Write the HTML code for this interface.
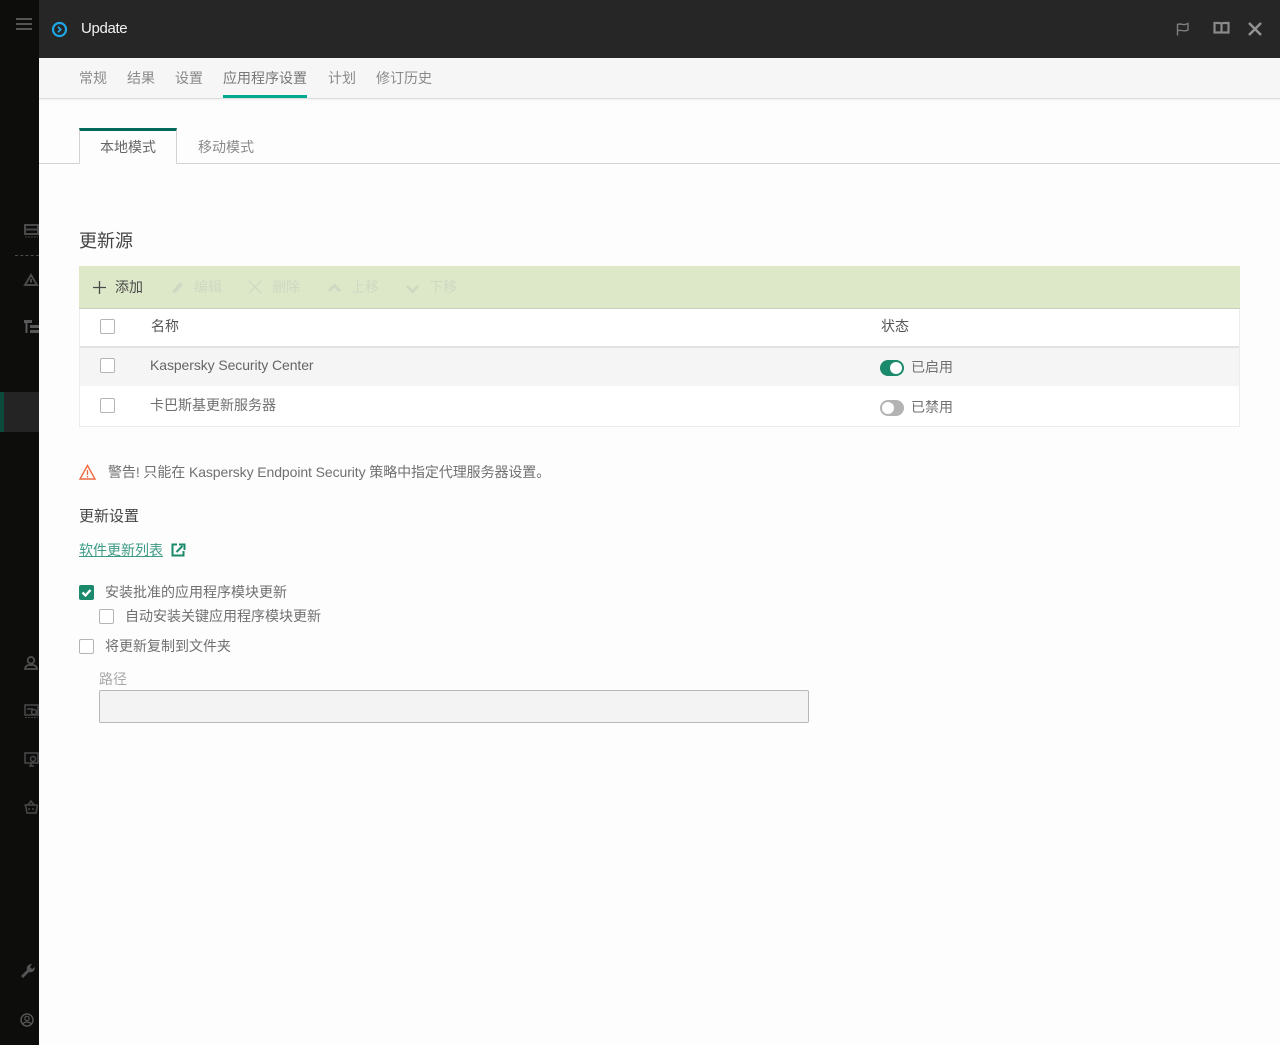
<!DOCTYPE html>
<html lang="zh">
<head>
<meta charset="utf-8">
<title>Update</title>
<style>
html,body{margin:0;padding:0;width:1280px;height:1045px;overflow:hidden;background:#fdfdfd;}
body{position:relative;font-family:"Liberation Sans","Noto Sans CJK SC",sans-serif;font-size:14px;color:#5c5c5c;}
.a{position:absolute;white-space:nowrap;line-height:20px;}
.box{position:absolute;width:13px;height:13px;border:1px solid #b4b4b4;border-radius:2px;background:#fff;}
svg{position:absolute;overflow:visible;}
.side{position:absolute;left:0;top:0;width:39px;height:1045px;background:#0d0d0c;overflow:hidden;}
.sic{fill:none;stroke:#4a4a4a;stroke-width:1.5;}
.dis{color:#cfd9c2;}
</style>
</head>
<body>
<!-- sidebar -->
<div class="side">
  <div style="position:absolute;left:0;top:392px;width:39px;height:40px;background:#242424;"></div>
  <div style="position:absolute;left:0;top:392px;width:4px;height:40px;background:#0e4a3c;"></div>
  <div style="position:absolute;left:16px;top:18px;width:16px;height:2px;background:#555;"></div>
  <div style="position:absolute;left:16px;top:23px;width:16px;height:2px;background:#555;"></div>
  <div style="position:absolute;left:16px;top:28px;width:16px;height:2px;background:#555;"></div>
  <div style="position:absolute;left:15px;top:255px;width:24px;border-top:1px dashed #4a4a4a;"></div>
  <svg style="left:0;top:0" width="39" height="1045">
    <path d="M25 225h13v9h-13zM25 229.500h13" fill="none" stroke="#4a4a4a" stroke-width="2"/>
    <path d="M25 237h13" stroke="#444" stroke-width="1" stroke-dasharray="2 1"/>
    <path d="M31 275l6 10h-12zM31 279v3.500" fill="none" stroke="#4a4a4a" stroke-width="2"/>
    <path d="M24 320h8v3h-8z" fill="#5a5a5a"/>
    <path d="M26.500 323v10" fill="none" stroke="#5a5a5a" stroke-width="2"/>
    <path d="M30 325h9v3h-9zM30 330h9v3h-9z" fill="#5a5a5a"/>
    <path d="M31 657a3.300 3.300 0 1 1-.01 0zM25 669c0-3 3-4 4-4h4c1 0 4 1 4 4z" fill="none" stroke="#4f4f4f" stroke-width="1.700"/>
    <path class="sic" d="M25 705h13v10h-13zM27 709h6"/>
    <circle cx="34" cy="712" r="2.500" fill="#0d0d0c" stroke="#4a4a4a" stroke-width="1.500"/>
    <path d="M25 717.500h13" stroke="#444" stroke-width="1" stroke-dasharray="2 1"/>
    <path class="sic" d="M25 753h13v10h-13zM29 766h5M31 763v3"/>
    <circle cx="33" cy="759" r="2.500" fill="#0d0d0c" stroke="#4a4a4a" stroke-width="1.500"/>
    <path class="sic" d="M24.500 805h13M25.500 805l1.500 8h9l1.500-8M28 805l3-4 3 4M29 808v2M33 808v2"/>
    <path d="M21 976l6-6c-1-3 1-6 5-6l-2 3 2 2 3-2c0 4-3 6-6 5l-6 6z" fill="#555"/>
    <circle cx="27" cy="1020" r="6" fill="none" stroke="#555" stroke-width="1.500"/>
    <circle cx="27" cy="1018.500" r="2.200" fill="none" stroke="#555" stroke-width="1.200"/>
    <path d="M23 1024c1-2.500 7-2.500 8 0" fill="none" stroke="#555" stroke-width="1.200"/>
  </svg>
</div>

<!-- header -->
<div style="position:absolute;left:39px;top:0;width:1241px;height:58px;background:#262626;"></div>
<svg style="left:51px;top:21px" width="17" height="17" viewBox="0 0 17 17">
  <circle cx="8.500" cy="8.500" r="6.500" fill="none" stroke="#1ea6e6" stroke-width="2.200"/>
  <path d="M7 5.800l2.700 2.700L7 11.200" fill="none" stroke="#1ea6e6" stroke-width="1.800"/>
</svg>
<div class="a" style="left:81px;top:19px;color:#f2f2f2;font-size:15px;letter-spacing:-.35px;">Update</div>
<svg style="left:1175px;top:20px" width="18" height="18" viewBox="0 0 18 18">
  <path d="M2.500 15.500V4.500c3-1.500 5 .5 7.500 0 1-.2 2-.6 3-1v6.500c-2.500 1.200-4.500 1-6.500.5-1.500-.3-3-.2-4 .5" fill="none" stroke="#7f7f7f" stroke-width="1.400"/>
</svg>
<svg style="left:1213px;top:21px" width="17" height="15" viewBox="0 0 17 15">
  <path d="M1.500 2h5c1 0 2 .5 2 1.500 0-1 1-1.500 2-1.500h5v9.500h-5.500c-.7 0-1.500.3-1.500 1 0-.7-.8-1-1.500-1H1.500zM8.500 3.500v9" fill="none" stroke="#8a8a8a" stroke-width="2.200"/>
</svg>
<svg style="left:1248px;top:22px" width="14" height="14" viewBox="0 0 14 14">
  <path d="M1 1l12 12M13 1L1 13" stroke="#929292" stroke-width="2.500" fill="none"/>
</svg>

<!-- top nav -->
<div style="position:absolute;left:39px;top:58px;width:1241px;height:40px;background:#f6f6f6;border-bottom:1px solid #dcdcdc;box-shadow:0 1px 2px rgba(0,0,0,.06);"></div>
<div class="a" style="left:79px;top:68px;color:#8a8a8a;">常规</div>
<div class="a" style="left:127px;top:68px;color:#8a8a8a;">结果</div>
<div class="a" style="left:175px;top:68px;color:#8a8a8a;">设置</div>
<div class="a" style="left:223px;top:68px;color:#777;">应用程序设置</div>
<div style="position:absolute;left:223px;top:95px;width:84px;height:3px;background:#00a88e;"></div>
<div class="a" style="left:328px;top:68px;color:#8a8a8a;">计划</div>
<div class="a" style="left:376px;top:68px;color:#8a8a8a;">修订历史</div>

<!-- tabs -->
<div style="position:absolute;left:39px;top:163px;width:1241px;height:1px;background:#d2d2d2;"></div>
<div style="position:absolute;left:79px;top:128px;width:96px;background:#fdfdfd;border-left:1px solid #d2d2d2;border-right:1px solid #d2d2d2;border-top:3px solid #006a5a;height:33px;"></div>
<div class="a" style="left:100px;top:137px;color:#666;">本地模式</div>
<div class="a" style="left:198px;top:137px;color:#8a8a8a;">移动模式</div>

<!-- section -->
<div class="a" style="left:79px;top:231px;font-size:18px;color:#444;">更新源</div>

<!-- toolbar -->
<div style="position:absolute;left:79px;top:266px;width:1161px;height:42px;background:#dde8c9;border-bottom:1px solid #c9cfc0;"></div>
<svg style="left:92px;top:280px" width="15" height="15"><path d="M7.500 1v13M1 7.500h13" stroke="#4a4a4a" stroke-width="1.300"/></svg>
<div class="a" style="left:115px;top:277px;color:#4a4a4a;">添加</div>
<svg style="left:171px;top:280px" width="14" height="14"><path d="M1 13l1-3 7-8 3 2.500-7 8z" fill="#cfd9c2"/></svg>
<div class="a dis" style="left:194px;top:277px;">编辑</div>
<svg style="left:248px;top:280px" width="14" height="14"><path d="M1 1l12 12M13 1L1 13" stroke="#cfd9c2" stroke-width="1.300"/></svg>
<div class="a dis" style="left:272px;top:277px;">删除</div>
<svg style="left:327px;top:283px" width="15" height="10"><path d="M2 8l5.500-5.500L13 8" fill="none" stroke="#cfd9c2" stroke-width="3"/></svg>
<div class="a dis" style="left:351px;top:277px;">上移</div>
<svg style="left:405px;top:284px" width="15" height="10"><path d="M2 2l5.500 5.500L13 2" fill="none" stroke="#cfd9c2" stroke-width="3"/></svg>
<div class="a dis" style="left:429px;top:277px;">下移</div>

<!-- table -->
<div style="position:absolute;left:79px;top:309px;width:1159px;height:117px;background:#fff;border:1px solid #ececec;border-top:none;"></div>
<div style="position:absolute;left:80px;top:346px;width:1159px;height:2px;background:#e2e2e2;"></div>
<div style="position:absolute;left:80px;top:348px;width:1159px;height:38px;background:#f5f5f5;"></div>

<div class="box" style="left:100px;top:319px;"></div>
<div class="a" style="left:151px;top:316px;color:#555;">名称</div>
<div class="a" style="left:881px;top:316px;color:#555;">状态</div>

<div class="box" style="left:100px;top:358px;"></div>
<div class="a" style="left:150px;top:355px;color:#666;letter-spacing:-.09px;">Kaspersky Security Center</div>
<div style="position:absolute;left:880px;top:360px;width:24px;height:16px;border-radius:8px;background:#1b8a6c;"></div>
<div style="position:absolute;left:890px;top:362px;width:12px;height:12px;border-radius:6px;background:#fff;"></div>
<div class="a" style="left:911px;top:357px;color:#707070;">已启用</div>

<div class="box" style="left:100px;top:398px;"></div>
<div class="a" style="left:150px;top:395px;color:#707070;">卡巴斯基更新服务器</div>
<div style="position:absolute;left:880px;top:400px;width:24px;height:16px;border-radius:8px;background:#b3b3b3;"></div>
<div style="position:absolute;left:882px;top:402px;width:12px;height:12px;border-radius:6px;background:#fff;"></div>
<div class="a" style="left:911px;top:397px;color:#707070;">已禁用</div>

<!-- warning -->
<svg style="left:79px;top:464px" width="17" height="16" viewBox="0 0 17 16">
  <path d="M8.500 1.500L16 15H1z" fill="none" stroke="#ee6a42" stroke-width="1.400"/>
  <path d="M8.500 6v5M8.500 12v1.500" stroke="#ee6a42" stroke-width="1.300"/>
</svg>
<div class="a" style="left:108px;top:462px;color:#707070;letter-spacing:-.09px;">警告! 只能在 Kaspersky Endpoint Security 策略中指定代理服务器设置。</div>

<!-- settings -->
<div class="a" style="left:79px;top:507px;font-size:15px;color:#444;">更新设置</div>
<div class="a" style="left:79px;top:540px;color:#3d9b85;text-decoration:underline;">软件更新列表</div>
<svg style="left:171px;top:543px" width="15" height="14" viewBox="0 0 15 14">
  <path d="M6 1.500H1.500v11h11V8" fill="none" stroke="#1b8a6c" stroke-width="2"/>
  <path d="M5.500 9l6-6M8 1.500h5.500V7" fill="none" stroke="#1b8a6c" stroke-width="2"/>
</svg>

<div style="position:absolute;left:79px;top:585px;width:15px;height:15px;border-radius:2px;background:#1b8a6c;"></div>
<svg style="left:79px;top:585px" width="15" height="15"><path d="M3.500 7.500l3 3 5-5.500" fill="none" stroke="#fff" stroke-width="2.300"/></svg>
<div class="a" style="left:105px;top:582px;color:#707070;">安装批准的应用程序模块更新</div>
<div class="box" style="left:99px;top:609px;"></div>
<div class="a" style="left:125px;top:606px;color:#707070;">自动安装关键应用程序模块更新</div>
<div class="box" style="left:79px;top:639px;"></div>
<div class="a" style="left:105px;top:636px;color:#707070;">将更新复制到文件夹</div>
<div class="a" style="left:99px;top:669px;color:#a8a8a8;">路径</div>
<div style="position:absolute;left:99px;top:690px;width:708px;height:31px;background:#f3f3f3;border:1px solid #b8b8b8;border-radius:2px;"></div>
</body>
</html>
